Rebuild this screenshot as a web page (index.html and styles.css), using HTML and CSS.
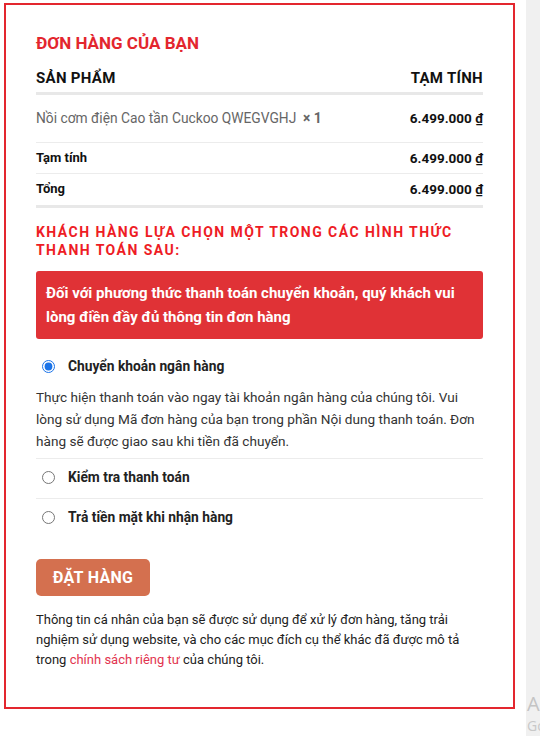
FILE: index.html
```html
<!DOCTYPE html>
<html lang="vi">
<head>
<meta charset="utf-8">
<title>Đơn hàng của bạn</title>
<link rel="stylesheet" href="styles.css">
</head>
<body>
<div class="page">
  <main class="main">
    <section class="order-box">
      <h3 class="order-title">ĐƠN HÀNG CỦA BẠN</h3>
      <div class="order-table">
        <div class="row row-head">
          <span>SẢN PHẨM</span>
          <span>TẠM TÍNH</span>
        </div>
        <div class="row row-item">
          <span class="item-name">Nồi cơm điện Cao tần Cuckoo QWEGVGHJ&nbsp; <strong class="qty">× 1</strong></span>
          <span class="price">6.499.000 <u>₫</u></span>
        </div>
        <div class="row row-sub">
          <span class="lbl">Tạm tính</span>
          <span class="price">6.499.000 <u>₫</u></span>
        </div>
        <div class="row row-total">
          <span class="lbl">Tổng</span>
          <span class="price">6.499.000 <u>₫</u></span>
        </div>
      </div>

      <h3 class="pay-title">KHÁCH HÀNG LỰA CHỌN MỘT TRONG CÁC HÌNH THỨC THANH TOÁN SAU:</h3>
      <div class="notice">Đối với phương thức thanh toán chuyển khoản, quý khách vui lòng điền đầy đủ thông tin đơn hàng</div>

      <ul class="methods">
        <li class="method m1">
          <label class="method-label"><input type="radio" name="pay" checked><span>Chuyển khoản ngân hàng</span></label>
          <p class="method-desc">Thực hiện thanh toán vào ngay tài khoản ngân hàng của chúng tôi. Vui lòng sử dụng Mã đơn hàng của bạn trong phần Nội dung thanh toán. Đơn hàng sẽ được giao sau khi tiền đã chuyển.</p>
        </li>
        <li class="method m2">
          <label class="method-label"><input type="radio" name="pay"><span>Kiểm tra thanh toán</span></label>
        </li>
        <li class="method m3">
          <label class="method-label"><input type="radio" name="pay"><span>Trả tiền mặt khi nhận hàng</span></label>
        </li>
      </ul>

      <button class="place-order" type="button">ĐẶT HÀNG</button>

      <p class="privacy">Thông tin cá nhân của bạn sẽ được sử dụng để xử lý đơn hàng, tăng trải nghiệm sử dụng website, và cho các mục đích cụ thể khác đã được mô tả trong <a href="#">chính sách riêng tư</a> của chúng tôi.</p>
    </section>
  </main>
  <aside class="side">
    <div class="watermark">
      <div class="wm-1">Activate Windows</div>
      <div class="wm-2">Go to Settings to activate Windows.</div>
    </div>
  </aside>
</div>
</body>
</html>
```

FILE: styles.css
```css
* { box-sizing: border-box; }
html, body { margin: 0; padding: 0; }
body {
  font-family: Roboto, "Noto Sans", "Liberation Sans", sans-serif;
  color: #222;
  background: #fff;
  width: 540px;
  height: 736px;
  overflow: hidden;
}
.page {
  display: flex;
  height: 736px;
}
.main {
  width: 526px;
  padding: 3px 0 0 4px;
}
.side {
  flex: 1;
  background: #f0f0f0;
  overflow: hidden;
  display: flex;
  flex-direction: column;
  justify-content: flex-end;
}
.order-box {
  width: 511px;
  border: 2px solid #e3262e;
  padding: 28px 30px 37px 30px;
}
.order-title {
  margin: 0;
  font-size: 17px;
  line-height: 20px;
  font-weight: 700;
  color: #e3262e;
}
.order-table { margin-top: 15px; }
.row {
  display: flex;
  justify-content: space-between;
  align-items: center;
  line-height: 20px;
}
.row-head {
  font-size: 15px;
  font-weight: 700;
  color: #111;
  padding-bottom: 4px;
  border-bottom: 3px solid #e8e8e8;
  letter-spacing: 0.3px;
}
.row-item {
  padding: 13px 0 14px;
  border-bottom: 1px solid #ececec;
  font-size: 13.8px;
}
.item-name { color: #666; }
.qty { color: #666; font-weight: 700; }
.price {
  font-size: 13.5px;
  font-weight: 700;
  color: #111;
}
.row-sub {
  padding: 5px 0 5px;
  border-bottom: 1px solid #ececec;
}
.row-total {
  padding: 5px 0 6px;
  border-bottom: 3px solid #e8e8e8;
}
.lbl {
  font-size: 13px;
  font-weight: 700;
  color: #111;
}
.pay-title {
  margin: 15px 0 0;
  font-size: 14px;
  line-height: 18px;
  font-weight: 700;
  letter-spacing: 1.45px;
  color: #ee1c25;
}
.notice {
  margin-top: 12px;
  background: #e03236;
  color: #fff;
  border-radius: 3px;
  padding: 10px 10px;
  font-size: 15px;
  line-height: 24px;
  font-weight: 700;
}
.methods {
  list-style: none;
  margin: 9px 0 0;
  padding: 0;
}
.method { border-bottom: 1px solid #ececec; }
.method:last-child { border-bottom: none; }
.m1 { padding: 8px 0 6px; }
.m2 { padding: 8px 0 11px; }
.m3 { padding: 8px 0 0; }
.method-label {
  display: flex;
  align-items: center;
  font-size: 13.8px;
  line-height: 20px;
  font-weight: 700;
  color: #222;
}
.method-label input {
  margin: 0 13px 0 6px;
  width: 13px;
  height: 13px;
  accent-color: #1a73e8;
}
.method-desc {
  margin: 10px 0 0;
  font-size: 13.6px;
  line-height: 22px;
  color: #333;
}
.place-order {
  display: block;
  margin-top: 32px;
  width: 114px;
  height: 37px;
  border: none;
  border-radius: 5px;
  background: #d4704f;
  color: #fff;
  font-family: inherit;
  font-size: 16px;
  font-weight: 700;
  letter-spacing: 0.3px;
  padding: 0;
}
.privacy {
  margin: 14px 0 0;
  font-size: 13px;
  line-height: 20px;
  color: #222;
}
.privacy a {
  color: #e2344f;
  text-decoration: none;
}
.watermark {
  padding: 0 0 0 1px;
  margin-bottom: 0;
  white-space: nowrap;
  font-family: "Open Sans", "Liberation Sans", sans-serif;
  color: #c4c4c4;
}
.wm-1 { font-size: 20px; line-height: 24px; }
.wm-2 { font-size: 14px; line-height: 20px; color: #c8c8c8; }
```
